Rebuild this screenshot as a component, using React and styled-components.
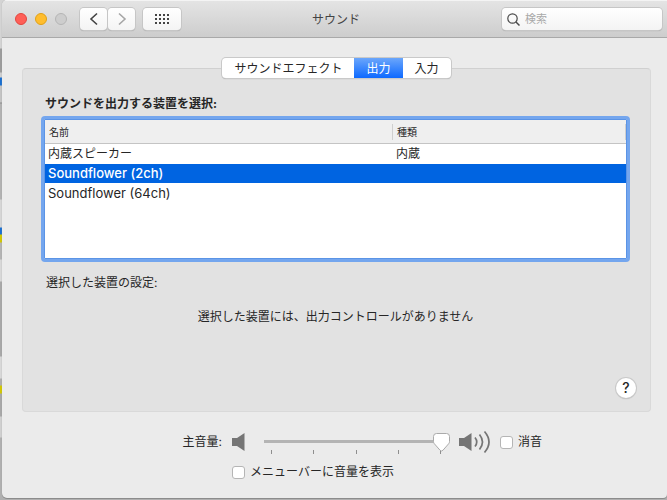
import React, { useState } from "react";
import styled, { createGlobalStyle } from "styled-components";

const GlobalStyle = createGlobalStyle`
    * {
        box-sizing: border-box;
    }

    body {
        margin: 0;
        font-family: Inter, "Noto Sans CJK JP", sans-serif;
        font-size: 12px;
        line-height: 16px;
        color: #262626;
    }

    button, input {
        font: inherit;
        color: inherit;
    }
`;

const Desktop = styled.div`
    display: flex;
    min-height: 100vh;
    padding: 0 0 2px 2px;
    background: linear-gradient(
        #d4d4d4 48px, #9c9c9c 49px 72px, #d0d0d0 73px 77px, #1a6fd0 78px 85px,
        #c4c4c4 86px 102px, #8a8a8a 103px, #b2b2b2 104px 199px, #d6d6d6 200px 227px,
        #1a6fd0 228px 234px, #d2c800 235px 242px, #b4b4b4 243px 259px,
        #d8d8d8 260px 281px, #a8a8a8 282px 356px, #d8d8d8 357px 378px,
        #b0b0b0 379px 385px, #d2c800 386px 393px, #a8a8a8 394px 416px,
        #d0d0d0 417px 437px, #b0b0b0 438px
    );
`;

const Window = styled.main`
    flex: 1;
    min-width: 0;
    display: flex;
    flex-direction: column;
    background: #ebebeb;
    border-radius: 5px 0 4px 5px;
    box-shadow: 0 1px 0 0 #8c8c8c, 0 0 1px 0 #8c8c8c;
    overflow: hidden;
`;

const TitleBar = styled.header`
    display: grid;
    grid-template-columns: 1fr auto 1fr;
    align-items: center;
    height: 38px;
    padding: 0 5px 0 8px;
    border-top: 1px solid #f4f4f4;
    border-bottom: 1px solid #a9a9a9;
    background: linear-gradient(#e4e4e4, #cdcdcd);
`;

const TitleText = styled.h1`
    margin: 0;
    padding-top: 2px;
    font-size: 12px;
    font-weight: 400;
    color: #444;
`;

const Toolbar = styled.div`
    display: flex;
    align-items: center;
    padding-left: 5px;
`;

const Lights = styled.div`
    display: flex;
    gap: 8px;
    margin-right: 13px;
`;

const Light = styled.button`
    width: 12px;
    height: 12px;
    padding: 0;
    border: 1px solid ${(props) => props.$edge};
    border-radius: 50%;
    background: ${(props) => props.$color};
`;

const ToolButton = styled.button`
    display: flex;
    align-items: center;
    justify-content: center;
    width: ${(props) => (props.$wide ? "38px" : "27px")};
    height: 22px;
    padding: 0;
    border: 0;
    border-radius: 4px;
    background: linear-gradient(#fff, #f4f4f4);
    box-shadow: 0 0 0 1px #c6c6c6, 0 1px 1px #999;
    color: #444;

    &:disabled {
        color: #a6a6a6;
    }
`;

const NavGroup = styled.div`
    display: flex;
    gap: 1px;
    margin-right: 8px;
`;

const SearchBox = styled.label`
    justify-self: end;
    display: flex;
    align-items: center;
    gap: 5px;
    width: 160px;
    height: 22px;
    padding: 0 5px;
    border-radius: 4px;
    background: linear-gradient(#fff, #f4f4f4);
    box-shadow: 0 0 0 1px #c6c6c6, 0 1px 1px #999;
`;

const SearchInput = styled.input`
    flex: 1;
    min-width: 0;
    padding: 0;
    border: 0;
    outline: 0;
    background: none;
    font-size: 11px;

    &::placeholder {
        color: #a9a9a9;
        opacity: 1;
    }
`;

const Content = styled.div`
    padding: 20px 16px 0 20px;
`;

const Tabs = styled.div`
    position: relative;
    display: flex;
    width: max-content;
    margin: 0 auto -10px;
    border-radius: 4px;
    background: #fff;
    box-shadow: 0 0 0 1px #c9c9c9, 0 1px 1px #a0a0a0;
`;

const Tab = styled.button`
    height: 20px;
    padding: 2px 12px 0;
    border: 0;
    background: transparent;

    &[aria-selected="true"] {
        background: linear-gradient(#6ba6fb, #0d69ff);
        color: #fff;
    }

    &:first-child {
        border-radius: 4px 0 0 4px;
    }

    &:last-child {
        border-radius: 0 4px 4px 0;
    }
`;

const Panel = styled.section`
    display: flex;
    flex-direction: column;
    padding: 27px 20px 13px 18px;
    border: 1px solid #d9d9d9;
    border-top-color: #d0d0d0;
    border-radius: 4px;
    background: #e2e2e2;
`;

const DeviceLabel = styled.h2`
    margin: 0 0 4px 4px;
    font-size: 12px;
    line-height: 16px;
    font-weight: 700;
`;

const TableFrame = styled.div`
    min-height: 146px;
    border: 3px solid #74a6ee;
    border-radius: 4px;
    background: #fff;
    box-shadow: inset 0 0 0 1px #5b94e6;
    padding: 1px;
`;

const DeviceTable = styled.table`
    width: 100%;
    table-layout: fixed;
    border-collapse: separate;
    border-spacing: 0;
`;

const HeadCell = styled.th`
    width: ${(props) => props.$width};
    height: 24px;
    padding: 3px 0;
    border-bottom: 1px solid #c4c4c4;
    background: #efefef;
    font-size: 10px;
    font-weight: 400;
    text-align: left;
`;

const HeadText = styled.div`
    padding-left: 4px;
    border-right: 1px solid #cfcfcf;
`;

const Cell = styled.td`
    height: 20px;
    padding: 0 3px;
    border-bottom: 1px solid #fff;
    font-size: ${(props) => (props.$latin ? "13px" : "12px")};
    line-height: 19px;
    white-space: nowrap;
`;

const DeviceRow = styled.tr`
    color: ${(props) => (props.$selected ? "#fff" : "inherit")};
    font-weight: ${(props) => (props.$selected ? 500 : 400)};

    ${Cell} {
        background: ${(props) => (props.$selected ? "#0064e1" : "#fff")};
    }
`;

const SettingsLabel = styled.p`
    margin: 13px 0 0 5px;
`;

const Message = styled.p`
    margin: 18px 0 0;
    text-align: center;
`;

const HelpButton = styled.button`
    align-self: flex-end;
    width: 20px;
    height: 20px;
    margin: 53px -6px 0 0;
    padding: 0;
    border: 0;
    border-radius: 50%;
    background: #fff;
    box-shadow: 0 0 0 1px #c9c9c9, 0 1px 1px #999;
    font-size: 14px;
    font-weight: 500;
    line-height: 20px;
`;

const VolumeGrid = styled.div`
    display: grid;
    grid-template-columns: 200px 1fr;
    column-gap: 10px;
    row-gap: 12px;
    align-items: center;
    padding-top: 20px;
`;

const VolumeLabel = styled.label`
    text-align: right;
`;

const VolumeControls = styled.div`
    display: flex;
    align-items: center;
    height: 20px;
`;

const SliderBox = styled.div`
    width: 186px;
    height: 20px;
    margin: 0 9px 0 19px;
`;

const thumb = `url("data:image/svg+xml,%3Csvg xmlns='http://www.w3.org/2000/svg' width='17' height='20'%3E%3Cpath d='M3.500 1.500h10q3 0 3 3v5q0 1.300-.8 2.200l-5.700 6.500q-1.500 1.600-3 0l-5.700-6.500q-.8-.9-.8-2.200v-5q0-3 3-3z' fill='white' stroke='%23aaa'/%3E%3C/svg%3E")`;

const Slider = styled.input`
    position: relative;
    display: block;
    appearance: none;
    width: 100%;
    height: 20px;
    margin: 0;
    background: linear-gradient(#b4b4b4, #b4b4b4) 0 8px / calc(100% - 8px) 3px no-repeat;

    &::-webkit-slider-thumb {
        appearance: none;
        width: 17px;
        height: 20px;
        border: 0;
        background: ${thumb} no-repeat;
    }
`;

const Ticks = styled.div`
    display: flex;
    justify-content: space-between;
    margin-top: -1px;
    padding: 0 9px 0 7px;
`;

const Tick = styled.span`
    width: 1px;
    height: 4px;
    margin-top: -1px;
    background: #8e8e8e;
`;

const CheckLabel = styled.label`
    display: flex;
    align-items: center;
    gap: 5px;
    grid-column: 2;
`;

const Checkbox = styled.input`
    appearance: none;
    width: 13px;
    height: 13px;
    margin: 0;
    border: 1px solid #b5b5b5;
    border-radius: 3px;
    background: #fff;

    &:checked {
        background: #0d69ff;
    }
`;

const Loud = styled.svg`
    margin-right: 9px;
`;

const devices = [
    { name: "内蔵スピーカー", kind: "内蔵" },
    { name: "Soundflower (2ch)", kind: "", latin: true },
    { name: "Soundflower (64ch)", kind: "", latin: true },
];

const tabs = ["サウンドエフェクト", "出力", "入力"];

function Chevron(props) {
    return (
        <svg width="10" height="14" viewBox="0 0 10 14" fill="none" stroke="currentColor" strokeWidth="1.6">
            <path d={props.right ? "M2 1.5 8 7 2 12.5" : "M8 1.5 2 7 8 12.5"} />
        </svg>
    );
}

function GridIcon() {
    return (
        <svg width="14" height="10" viewBox="0 0 14 10" fill="currentColor">
            {[0, 4, 8].map((y) =>
                [0, 4, 8, 12].map((x) => <rect key={x + "-" + y} x={x} y={y} width="2" height="2" />)
            )}
        </svg>
    );
}

function App() {
    const [tab, setTab] = useState("出力");
    const [selected, setSelected] = useState(1);
    const [volume, setVolume] = useState(100);

    return (
        <Desktop>
            <GlobalStyle />
            <Window>
                <TitleBar>
                    <Toolbar>
                        <Lights>
                            <Light $color="#ff5f57" $edge="#e2463f" aria-label="閉じる" />
                            <Light $color="#ffbd2e" $edge="#e1a116" aria-label="しまう" />
                            <Light $color="#cdcdcd" $edge="#b5b5b5" aria-label="拡大" disabled />
                        </Lights>
                        <NavGroup>
                            <ToolButton aria-label="戻る">
                                <Chevron />
                            </ToolButton>
                            <ToolButton aria-label="進む" disabled>
                                <Chevron right />
                            </ToolButton>
                        </NavGroup>
                        <ToolButton $wide aria-label="すべてを表示">
                            <GridIcon />
                        </ToolButton>
                    </Toolbar>
                    <TitleText>サウンド</TitleText>
                    <SearchBox>
                        <svg width="13" height="13" viewBox="0 0 13 13" fill="none" stroke="#4a4a4a" strokeWidth="1.2">
                            <circle cx="5.5" cy="5.5" r="4.7" />
                            <path d="m9 9 3.5 3.5" strokeWidth="1.5" />
                        </svg>
                        <SearchInput type="search" placeholder="検索" aria-label="検索" />
                    </SearchBox>
                </TitleBar>

                <Content>
                    <Tabs role="tablist">
                        {tabs.map((name) => (
                            <Tab key={name} role="tab" aria-selected={tab === name} onClick={() => setTab(name)}>
                                {name}
                            </Tab>
                        ))}
                    </Tabs>

                    <Panel>
                        <DeviceLabel id="devices">サウンドを出力する装置を選択:</DeviceLabel>
                        <TableFrame>
                            <DeviceTable aria-labelledby="devices">
                                <thead>
                                    <tr>
                                        <HeadCell $width="348px">
                                            <HeadText>名前</HeadText>
                                        </HeadCell>
                                        <HeadCell>
                                            <HeadText>種類</HeadText>
                                        </HeadCell>
                                    </tr>
                                </thead>
                                <tbody>
                                    {devices.map((device, index) => (
                                        <DeviceRow
                                            key={device.name}
                                            $selected={selected === index}
                                            onClick={() => setSelected(index)}
                                        >
                                            <Cell $latin={device.latin}>{device.name}</Cell>
                                            <Cell>{device.kind}</Cell>
                                        </DeviceRow>
                                    ))}
                                </tbody>
                            </DeviceTable>
                        </TableFrame>
                        <SettingsLabel>選択した装置の設定:</SettingsLabel>
                        <Message>選択した装置には、出力コントロールがありません</Message>
                        <HelpButton aria-label="ヘルプ">?</HelpButton>
                    </Panel>

                    <VolumeGrid>
                        <VolumeLabel htmlFor="volume">主音量:</VolumeLabel>
                        <VolumeControls>
                            <svg width="13" height="18" viewBox="0 0 13 18" fill="#757575">
                                <path d="M0 5h5l7.5-5v18L5 13H0z" />
                            </svg>
                            <SliderBox>
                                <Slider
                                    id="volume"
                                    type="range"
                                    min="0"
                                    max="100"
                                    value={volume}
                                    onChange={(event) => setVolume(event.target.value)}
                                />
                                <Ticks>
                                    {[0, 25, 50, 75, 100].map((n) => (
                                        <Tick key={n} />
                                    ))}
                                </Ticks>
                            </SliderBox>
                            <Loud width="32" height="24" viewBox="0 0 32 24" fill="none" stroke="#757575" strokeWidth="1.7">
                                <path d="M0 8h5l7.5-5v18L5 16H0z" fill="#757575" stroke="none" />
                                <path d="M16 7.5q3.500 4.500 0 9M20.500 4.500q6 7.500 0 15M25.500 1.500q9 10.500 0 21" />
                            </Loud>
                            <CheckLabel>
                                <Checkbox type="checkbox" />
                                消音
                            </CheckLabel>
                        </VolumeControls>
                        <CheckLabel>
                            <Checkbox type="checkbox" />
                            メニューバーに音量を表示
                        </CheckLabel>
                    </VolumeGrid>
                </Content>
            </Window>
        </Desktop>
    );
}

export default App;
